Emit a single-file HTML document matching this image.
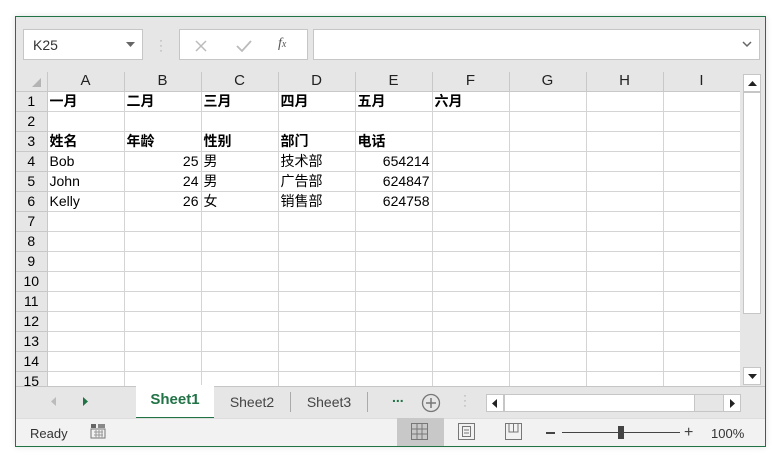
<!DOCTYPE html>
<html><head><meta charset="utf-8"><style>
*{box-sizing:border-box;margin:0;padding:0}
body{width:783px;height:464px;background:#fff;font-family:"Liberation Sans","Noto Sans CJK SC",sans-serif;position:relative;overflow:hidden}
.a{position:absolute}
#frame{left:15px;top:16px;width:751px;height:431px;border:1px solid #217346;background:#e6e6e6;box-shadow:0 0 6px rgba(0,0,0,.12)}
.box{background:#fff;border:1px solid #c6c6c6}
table{border-collapse:collapse;table-layout:fixed;position:absolute;left:0;top:55px}
td{border:1px solid #d4d4d4;height:20px;font-size:14px;padding:0 2px;white-space:nowrap;overflow:hidden;color:#000;line-height:18px;background:#fff}
td.rh{background:#e6e6e6;text-align:center;border-color:#c8c8c8;font-size:14px;padding:0;border-left:none}
tr.ch td{background:#e6e6e6;text-align:center;height:19px;border-color:#c8c8c8;border-top:none;color:#222;font-size:15px}
td.n{text-align:right}
td.b{font-weight:bold}
</style></head><body>
<div id="frame" class="a">
 <div class="a box" style="left:7px;top:12px;width:120px;height:31px"><span class="a" style="left:9px;top:7px;font-size:14px;color:#333">K25</span>
  <svg class="a" style="left:102px;top:12px" width="10" height="6"><path d="M0 0H9L4.5 5Z" fill="#666"/></svg></div>
 <div class="a" style="left:143px;top:21px;color:#aaa;font-size:12px;line-height:5px">·<br>·<br>·</div>
 <div class="a box" style="left:163px;top:12px;width:129px;height:31px">
  <svg class="a" style="left:14px;top:9px" width="14" height="14"><path d="M2 2L12 12M12 2L2 12" stroke="#bbb" stroke-width="1.5"/></svg>
  <svg class="a" style="left:56px;top:9px" width="16" height="14"><path d="M1 7L6 12L15 2" stroke="#bbb" stroke-width="1.8" fill="none"/></svg>
  <span class="a" style="left:98px;top:6px;font-family:'Liberation Serif',serif;font-style:italic;font-size:14px;color:#555">f<span style="font-size:10px">x</span></span>
 </div>
 <div class="a box" style="left:297px;top:12px;width:447px;height:31px">
  <svg class="a" style="left:428px;top:11px" width="10" height="7"><path d="M1 1L5 5L9 1" stroke="#666" stroke-width="1.5" fill="none"/></svg></div>
 <table>
  <colgroup><col style="width:31px"><col style="width:77px"><col style="width:77px"><col style="width:77px"><col style="width:77px"><col style="width:77px"><col style="width:77px"><col style="width:77px"><col style="width:77px"><col style="width:77px"></colgroup>
  <tr class="ch"><td style="border-left:none"></td><td>A</td><td>B</td><td>C</td><td>D</td><td>E</td><td>F</td><td>G</td><td>H</td><td>I</td></tr>
  <tr><td class="rh">1</td><td class="b">一月</td><td class="b">二月</td><td class="b">三月</td><td class="b">四月</td><td class="b">五月</td><td class="b">六月</td><td></td><td></td><td></td></tr>
  <tr><td class="rh">2</td><td></td><td></td><td></td><td></td><td></td><td></td><td></td><td></td><td></td></tr>
  <tr><td class="rh">3</td><td class="b">姓名</td><td class="b">年龄</td><td class="b">性别</td><td class="b">部门</td><td class="b">电话</td><td></td><td></td><td></td><td></td></tr>
  <tr><td class="rh">4</td><td>Bob</td><td class="n">25</td><td>男</td><td>技术部</td><td class="n">654214</td><td></td><td></td><td></td><td></td></tr>
  <tr><td class="rh">5</td><td>John</td><td class="n">24</td><td>男</td><td>广告部</td><td class="n">624847</td><td></td><td></td><td></td><td></td></tr>
  <tr><td class="rh">6</td><td>Kelly</td><td class="n">26</td><td>女</td><td>销售部</td><td class="n">624758</td><td></td><td></td><td></td><td></td></tr>
  <tr><td class="rh">7</td><td></td><td></td><td></td><td></td><td></td><td></td><td></td><td></td><td></td></tr>
  <tr><td class="rh">8</td><td></td><td></td><td></td><td></td><td></td><td></td><td></td><td></td><td></td></tr>
  <tr><td class="rh">9</td><td></td><td></td><td></td><td></td><td></td><td></td><td></td><td></td><td></td></tr>
  <tr><td class="rh">10</td><td></td><td></td><td></td><td></td><td></td><td></td><td></td><td></td><td></td></tr>
  <tr><td class="rh">11</td><td></td><td></td><td></td><td></td><td></td><td></td><td></td><td></td><td></td></tr>
  <tr><td class="rh">12</td><td></td><td></td><td></td><td></td><td></td><td></td><td></td><td></td><td></td></tr>
  <tr><td class="rh">13</td><td></td><td></td><td></td><td></td><td></td><td></td><td></td><td></td><td></td></tr>
  <tr><td class="rh">14</td><td></td><td></td><td></td><td></td><td></td><td></td><td></td><td></td><td></td></tr>
  <tr><td class="rh">15</td><td></td><td></td><td></td><td></td><td></td><td></td><td></td><td></td><td></td></tr>
 </table>
 <svg class="a" style="left:16px;top:61px" width="10" height="10"><path d="M9 0V9H0Z" fill="#b4b4b4"/></svg>
 <div class="a" style="left:0;top:369px;width:749px;height:60px;background:#e6e6e6;border-top:1px solid #c6c6c6"></div>
 <div class="a" style="left:724px;top:55px;width:25px;height:314px;background:#e6e6e6"></div>
 <div class="a box" style="left:727px;top:57px;width:18px;height:18px"><svg class="a" style="left:4px;top:6px" width="9" height="5"><path d="M0 5H9L4.5 0Z" fill="#222"/></svg></div>
 <div class="a box" style="left:727px;top:75px;width:18px;height:222px"></div>
 <div class="a box" style="left:727px;top:350px;width:18px;height:18px"><svg class="a" style="left:4px;top:6px" width="9" height="5"><path d="M0 0H9L4.5 5Z" fill="#222"/></svg></div>
 <svg class="a" style="left:35px;top:380px" width="6" height="9"><path d="M5 0V9L0 4.5Z" fill="#bbb"/></svg>
 <svg class="a" style="left:67px;top:380px" width="6" height="9"><path d="M0 0V9L5 4.5Z" fill="#217346"/></svg>
 <div class="a" style="left:120px;top:368px;width:78px;height:34px;background:#fff;border-bottom:2px solid #217346;text-align:center;font-weight:bold;color:#217346;font-size:15px;line-height:30px">Sheet1</div>
 <div class="a" style="left:198px;top:375px;width:77px;text-align:center;color:#444;font-size:14px;line-height:20px;border-right:1px solid #aaa">Sheet2</div>
 <div class="a" style="left:275px;top:375px;width:77px;text-align:center;color:#444;font-size:14px;line-height:20px;border-right:1px solid #aaa">Sheet3</div>
 <div class="a" style="left:376px;top:372px;color:#217346;font-weight:bold;font-size:14px">...</div>
 <svg class="a" style="left:405px;top:376px" width="20" height="20"><circle cx="10" cy="10" r="8.5" stroke="#777" stroke-width="1.3" fill="none"/><path d="M10 5V15M5 10H15" stroke="#777" stroke-width="1.5"/></svg>
 <div class="a" style="left:447px;top:376px;color:#aaa;font-size:12px;line-height:5px">·<br>·<br>·</div>
 <div class="a box" style="left:470px;top:377px;width:255px;height:18px;background:#e6e6e6"></div>
 <div class="a box" style="left:470px;top:377px;width:18px;height:18px"><svg class="a" style="left:5px;top:4px" width="5" height="9"><path d="M5 0V9L0 4.5Z" fill="#222"/></svg></div>
 <div class="a box" style="left:488px;top:377px;width:191px;height:18px"></div>
 <div class="a box" style="left:707px;top:377px;width:18px;height:18px"><svg class="a" style="left:6px;top:4px" width="5" height="9"><path d="M0 0V9L5 4.5Z" fill="#222"/></svg></div>
 <div class="a" style="left:0;top:401px;width:749px;height:28px;background:#f2f2f2;border-top:1px solid #ddd"></div>
 <div class="a" style="left:14px;top:409px;font-size:13px;color:#333">Ready</div>
 <svg class="a" style="left:74px;top:406px" width="16" height="16"><rect x="1" y="1" width="5" height="4" fill="#666"/><rect x="1" y="6" width="14" height="9" fill="none" stroke="#777"/><path d="M4 9H13M4 12H13M6 7V15M9 7V15M12 7V15" stroke="#999"/><rect x="8" y="1" width="7" height="4" fill="#888"/></svg>
 <div class="a" style="left:381px;top:401px;width:47px;height:28px;background:#c8c8c8"></div>
 <svg class="a" style="left:395px;top:406px" width="17" height="17"><rect x=".5" y=".5" width="16" height="16" fill="none" stroke="#777"/><path d="M6 0V17M11 0V17M0 6H17M0 11H17" stroke="#777"/></svg>
 <svg class="a" style="left:442px;top:406px" width="17" height="17"><rect x=".5" y=".5" width="16" height="16" fill="none" stroke="#777"/><rect x="4.5" y="3.5" width="8" height="10" fill="none" stroke="#777"/><path d="M6 7H11M6 10H11" stroke="#777"/></svg>
 <svg class="a" style="left:489px;top:406px" width="17" height="17"><rect x=".5" y=".5" width="16" height="16" fill="none" stroke="#777"/><path d="M4 0V9H13V0M8.5 0V9" stroke="#777" fill="none"/></svg>
 <div class="a" style="left:530px;top:415px;width:9px;height:2px;background:#444"></div>
 <div class="a" style="left:546px;top:415px;width:118px;height:1px;background:#444"></div>
 <div class="a" style="left:602px;top:409px;width:6px;height:13px;background:#444"></div>
 <div class="a" style="left:668px;top:407px;font-size:16px;color:#444">+</div>
 <div class="a" style="left:695px;top:409px;font-size:13px;color:#333">100%</div>
</div>
</body></html>
